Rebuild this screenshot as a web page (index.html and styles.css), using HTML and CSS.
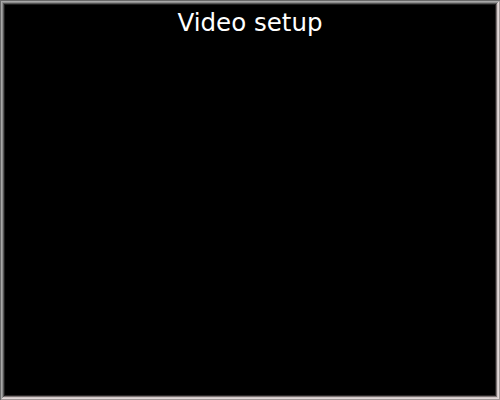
FILE: index.html
```html
<!DOCTYPE html>
<html>
<head>
<meta charset="utf-8">
<link rel="stylesheet" href="styles.css">
</head>
<body>
<div class="frame">
  <h1 class="title">Video setup</h1>
</div>
</body>
</html>
```
FILE: styles.css
```css
html, body {
  margin: 0;
  padding: 0;
  width: 500px;
  height: 400px;
  background: #000;
  overflow: hidden;
}
.frame {
  box-sizing: border-box;
  width: 500px;
  height: 400px;
  background: #000;
  box-shadow:
    inset 1px 1px 0 #6a6a6a,
    inset -1px -1px 0 #a09898,
    inset 2px 2px 0 #a8a8a8,
    inset -2px -2px 0 #e2d8d8,
    inset 3px 3px 0 #8c8c8c,
    inset -3px -3px 0 #cfc5c5,
    inset 4px 4px 0 #555,
    inset -4px -4px 0 #7a7272,
    inset 5px 5px 0 #1e1e1e,
    inset -5px -5px 0 #2a2626;
  display: flex;
  flex-direction: column;
  align-items: center;
}
.title {
  margin: 8px 0 0;
  font-family: "DejaVu Sans", sans-serif;
  font-weight: normal;
  font-size: 24.5px;
  line-height: 30px;
  color: #fff;
}
```
